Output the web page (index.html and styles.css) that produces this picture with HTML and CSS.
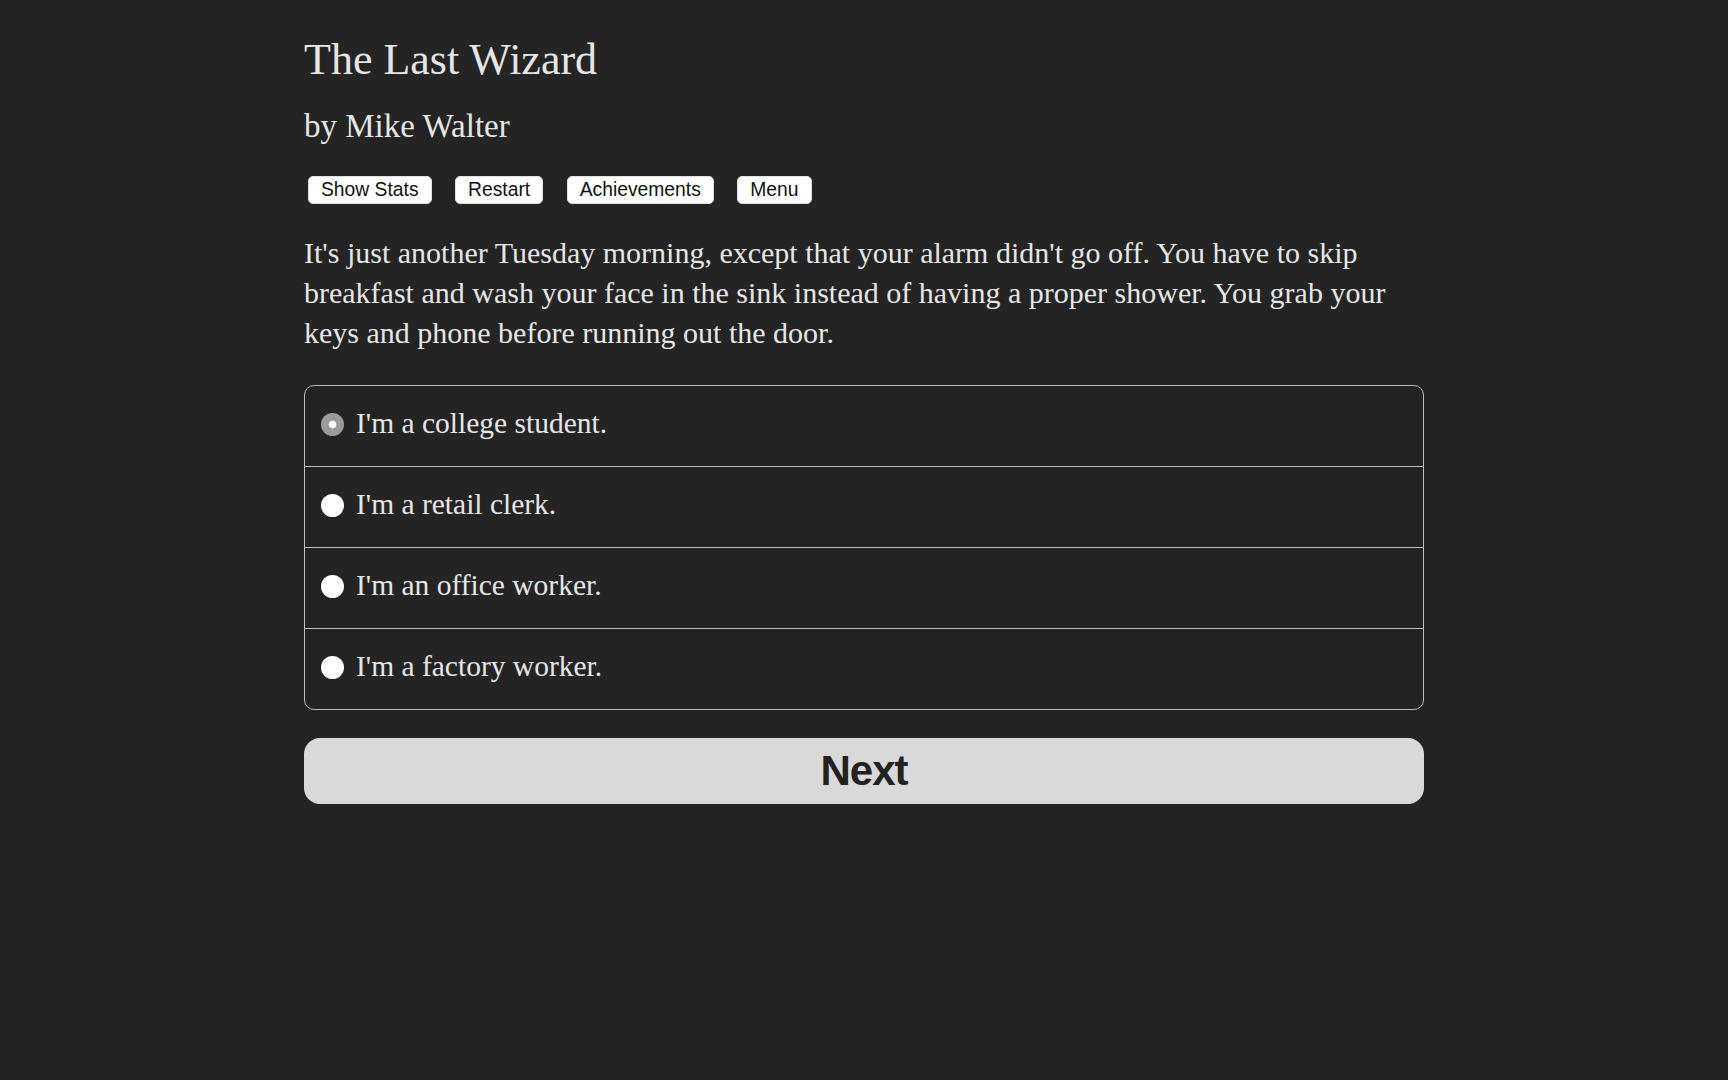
FILE: index.html
```html
<!DOCTYPE html>
<html lang="en">
<head>
<meta charset="utf-8">
<title>The Last Wizard</title>
<link rel="stylesheet" href="styles.css">
</head>
<body>
<main class="page">
  <h1 class="title">The Last Wizard</h1>
  <h2 class="byline">by Mike Walter</h2>
  <nav class="toolbar">
    <button class="tool-btn" type="button">Show Stats</button>
    <button class="tool-btn" type="button">Restart</button>
    <button class="tool-btn" type="button">Achievements</button>
    <button class="tool-btn" type="button">Menu</button>
  </nav>
  <p class="story">It's just another Tuesday morning, except that your alarm didn't go off. You have to skip breakfast and wash your face in the sink instead of having a proper shower. You grab your keys and phone before running out the door.</p>
  <form class="choices">
    <label class="choice"><input class="radio" type="radio" name="job" checked><span class="choice-text">I'm a college student.</span></label>
    <label class="choice"><input class="radio" type="radio" name="job"><span class="choice-text">I'm a retail clerk.</span></label>
    <label class="choice"><input class="radio" type="radio" name="job"><span class="choice-text">I'm an office worker.</span></label>
    <label class="choice"><input class="radio" type="radio" name="job"><span class="choice-text">I'm a factory worker.</span></label>
  </form>
  <button class="next-btn" type="button">Next</button>
</main>
</body>
</html>
```
FILE: styles.css
```css
html, body {
  margin: 0;
  padding: 0;
  background: #242424;
}

body {
  color: #e6e6e6;
  font-family: "Liberation Serif", "Times New Roman", serif;
}

.page {
  width: 1120px;
  margin: 0 auto;
  padding-top: 34px;
  display: flex;
  flex-direction: column;
}

.title {
  margin: 0;
  font-size: 44px;
  font-weight: normal;
  line-height: 52px;
}

.byline {
  margin: 20px 0 0;
  font-size: 33px;
  font-weight: normal;
  line-height: 40px;
}

.toolbar {
  display: flex;
  gap: 23.5px;
  margin-top: 30px;
  padding-left: 4px;
}

.tool-btn {
  font-family: "Liberation Sans", Arial, sans-serif;
  font-size: 19.3px;
  line-height: 20px;
  padding: 3px 12px;
  margin: 0;
  color: #111;
  background: #fff;
  border: 1px solid #e0e0e0;
  border-radius: 5px;
}

.story {
  margin: 29px 0 0;
  font-size: 30px;
  line-height: 40px;
}

.choices {
  margin: 32px 0 0;
  border: 1px solid #bdbdbd;
  border-radius: 10px;
  display: flex;
  flex-direction: column;
}

.choice {
  display: flex;
  align-items: center;
  gap: 12px;
  height: 80px;
  box-sizing: border-box;
  padding: 0 0 6px 16px;
  border-bottom: 1px solid #bdbdbd;
}

.choice:last-child {
  border-bottom: none;
  height: 80px;
}

.choice:not(:last-child) {
  height: 81px;
}

.radio {
  appearance: none;
  -webkit-appearance: none;
  margin: 0;
  width: 23px;
  height: 23px;
  border-radius: 50%;
  background: #fff;
  flex: none;
  position: relative;
  top: 1px;
}

.radio:checked {
  background: radial-gradient(circle, #fff 0 3.5px, #9b9b9b 4.2px);
}

.choice-text {
  font-size: 29.5px;
  line-height: 36px;
}

.next-btn {
  margin-top: 28px;
  height: 66px;
  width: 100%;
  border: none;
  border-radius: 16px;
  background: #d9d9d9;
  color: #222;
  font-family: "Liberation Sans", Arial, sans-serif;
  font-weight: bold;
  font-size: 42px;
  letter-spacing: -1px;
}
```
